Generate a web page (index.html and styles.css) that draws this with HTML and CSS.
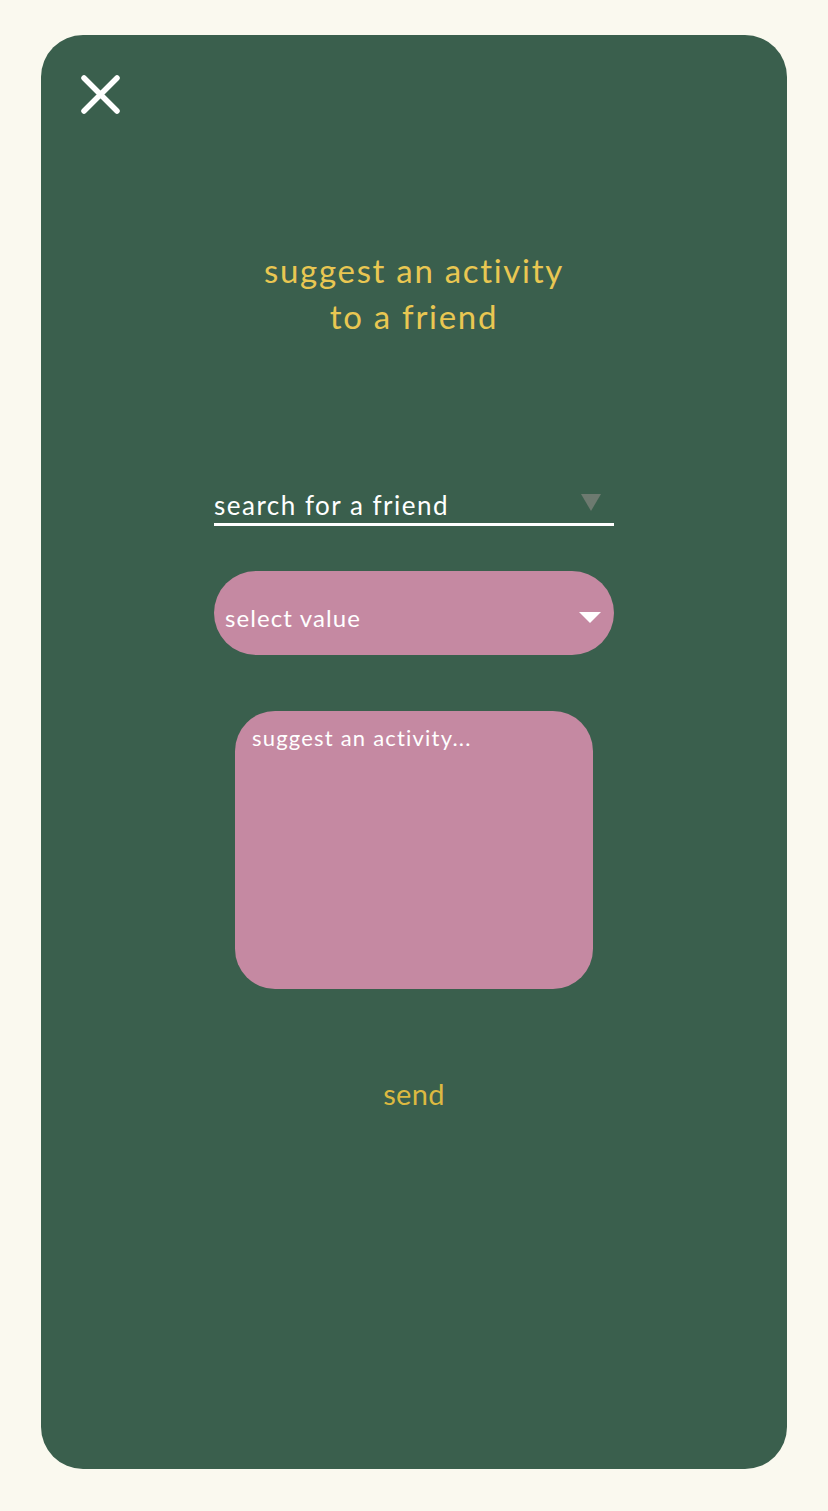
FILE: index.html
```html
<!DOCTYPE html>
<html>
<head>
<meta charset="utf-8">
<link rel="stylesheet" href="styles.css">
</head>
<body>
<div class="card">
  <button class="close" aria-label="close">
    <svg width="42" height="42" viewBox="0 0 42 42"><path d="M4 4L37 37M37 4L4 37" stroke="#fff" stroke-width="5.5" stroke-linecap="round"/></svg>
  </button>
  <h1 class="title">suggest an activity<br>to a friend</h1>
  <div class="form">
    <div class="search">
      <span class="search-text">search for a friend</span>
      <span class="tri tri-gray"></span>
    </div>
    <div class="select">
      <span class="select-text">select value</span>
      <span class="tri tri-white"></span>
    </div>
    <div class="textarea">suggest an activity...</div>
    <div class="send">send</div>
  </div>
</div>
</body>
</html>
```
FILE: styles.css
```css
html, body {
  margin: 0;
  padding: 0;
  background: #faf9ef;
}
body {
  padding: 35px 41px 42px;
  font-family: Lato, "Noto Sans", sans-serif;
}
.card {
  background: #3a5f4d;
  border-radius: 42px;
  height: 1434px;
  box-sizing: border-box;
  padding: 39px 39px 0;
  display: flex;
  flex-direction: column;
}
.close {
  background: none;
  border: none;
  padding: 0;
  width: 42px;
  height: 42px;
  cursor: pointer;
}
.close svg { display: block; }
.title {
  margin: 131px 0 0;
  text-align: center;
  color: #e9c752;
  font-weight: 400;
  font-size: 33px;
  letter-spacing: 1.7px;
  line-height: 46px;
}
.form {
  margin-top: 144px;
  display: flex;
  flex-direction: column;
  align-items: center;
}
.search {
  width: 400px;
  height: 40px;
  border-bottom: 3px solid #fff;
  display: flex;
  align-items: flex-end;
  justify-content: space-between;
  box-sizing: content-box;
}
.search-text {
  color: #fff;
  font-size: 26px;
  letter-spacing: 1.5px;
  line-height: 32px;
  padding-bottom: 2px;
}
.tri {
  width: 0;
  height: 0;
  border-left: 10px solid transparent;
  border-right: 10px solid transparent;
}
.tri-gray {
  border-top: 17px solid #6d7a70;
  margin: 0 13px 12px 0;
}
.select {
  margin-top: 45px;
  width: 400px;
  height: 84px;
  border-radius: 42px;
  background: #c589a2;
  display: flex;
  align-items: center;
  justify-content: space-between;
  box-sizing: border-box;
  padding: 8px 13px 0 11px;
}
.select-text {
  color: #fff;
  font-size: 24px;
  letter-spacing: 1.1px;
}
.tri-white {
  border-left-width: 11px;
  border-right-width: 11px;
  border-top: 11px solid #fff;
}
.textarea {
  margin-top: 56px;
  width: 358px;
  height: 278px;
  border-radius: 40px;
  background: #c589a2;
  color: #fff;
  font-size: 22px;
  letter-spacing: 1.2px;
  line-height: 26px;
  padding: 14px 17px;
  box-sizing: border-box;
}
.send {
  margin-top: 88px;
  color: #dcb941;
  font-size: 29px;
  letter-spacing: 0.3px;
  line-height: 34px;
}
```
